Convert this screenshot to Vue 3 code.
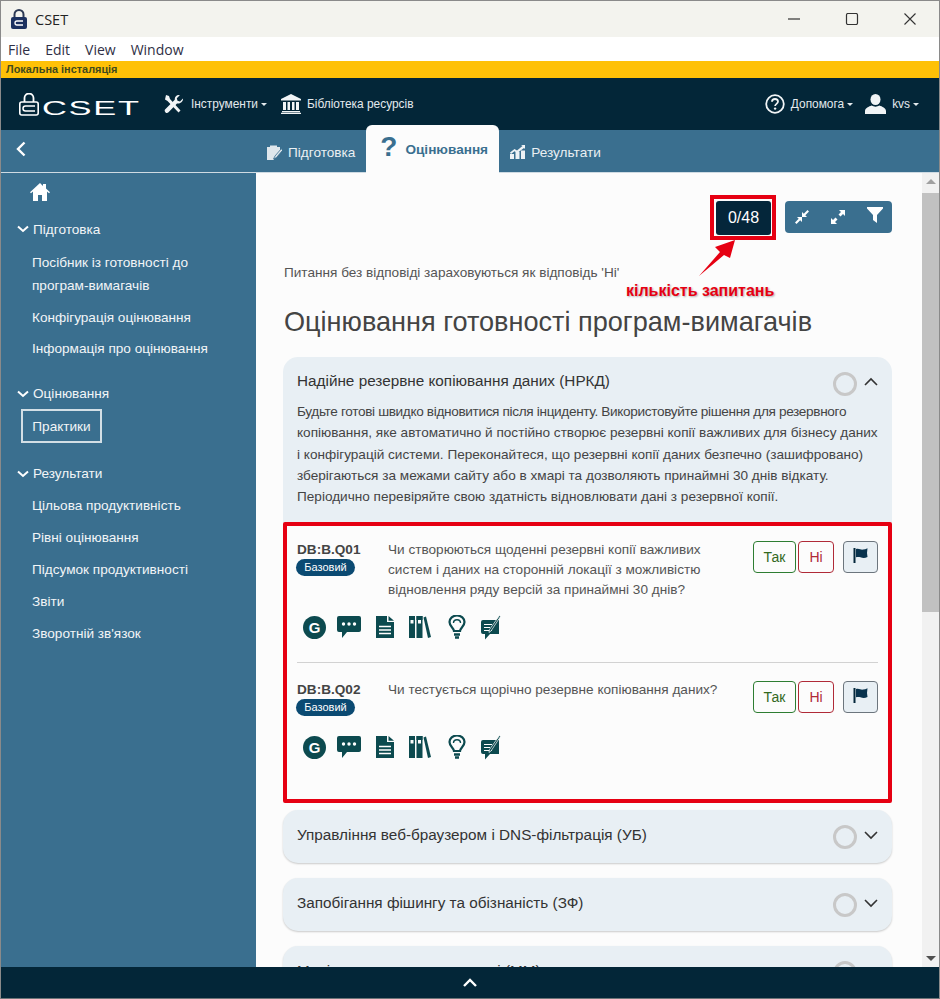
<template>
  <div class="window">
    <!-- title bar -->
    <div class="titlebar">
      <svg class="app-lock" viewBox="0 0 16 20" width="16" height="20">
        <path d="M3.500 9V5.500a4.500 4.500 0 0 1 9 0V9" fill="none" stroke="#2d3a55" stroke-width="2" />
        <rect x="0" y="8" width="16" height="12" rx="2" fill="#1c3160" />
        <path d="M12 12H6a1.500 1.500 0 0 0 0 4h6" fill="none" stroke="#fff" stroke-width="1.300" />
      </svg>
      <span class="app-name">CSET</span>
      <div class="win-controls">
        <svg viewBox="0 0 14 12" width="14" height="12"><path d="M1 6h12" stroke="#333" stroke-width="1.200" /></svg>
        <svg viewBox="0 0 14 12" width="14" height="12"><rect x="1.500" y="0.500" width="11" height="11" rx="1.500" fill="none" stroke="#333" stroke-width="1.200" /></svg>
        <svg viewBox="0 0 14 12" width="14" height="12"><path d="M1.500 0.500l11 11M12.500 0.500l-11 11" stroke="#333" stroke-width="1.100" /></svg>
      </div>
    </div>
    <div class="menubar">
      <span v-for="m in menu" :key="m">{{ m }}</span>
    </div>
    <div class="install-bar">Локальна інсталяція</div>

    <!-- top nav -->
    <div class="topnav">
      <div class="logo">
        <svg viewBox="0 0 20 23" width="20" height="23">
          <path d="M5.500 9V5a4.500 4.500 0 0 1 9 0v4" fill="none" stroke="#fff" stroke-width="1.800" />
          <rect x="0.800" y="9" width="18.400" height="13" rx="2" fill="none" stroke="#fff" stroke-width="1.600" />
          <path d="M16 13H6.500a2.200 2.200 0 0 0 0 5H16" fill="none" stroke="#fff" stroke-width="1.500" />
        </svg>
        <span class="logo-text">CSET</span>
      </div>
      <div class="nav-item tools">
        <svg viewBox="0 0 20 20" width="20" height="20">
          <path d="M2 1l3 1 1 3 10.500 11.500-2 2L3.500 7 1 5.500z" fill="#f1f4f6" />
          <path d="M19 4.500l-3 3-2.500-.8-.7-2.500 3-3c-2.800-.8-5.500 1.500-5 4.500L1.500 15a2.200 2.200 0 0 0 3 3.300L13 9.500c3 .6 6.500-2 6-5z" fill="#f1f4f6" />
        </svg>
        <span>Інструменти</span><i class="caret"></i>
      </div>
      <div class="nav-item library">
        <svg viewBox="0 0 20 20" width="20" height="20" fill="#f1f4f6">
          <path d="M10 0l10 5v1.500H0V5z" />
          <path d="M2 8h3v8H2zM6.500 8h2.500v8H6.500zM11 8h2.500v8H11zM15 8h3v8h-3zM1 17h18v1.300H1zM0 18.700h20V20H0z" />
        </svg>
        <span>Бібліотека ресурсів</span>
      </div>
      <div class="nav-right">
        <div class="nav-item help">
          <svg viewBox="0 0 20 20" width="20" height="20">
            <circle cx="10" cy="10" r="8.800" fill="none" stroke="#f1f4f6" stroke-width="1.800" />
            <path d="M7 7.800C7 5.900 8.300 5 10 5s3 1 3 2.600c0 2.300-2.900 2.200-2.900 4.400" fill="none" stroke="#f1f4f6" stroke-width="1.800" />
            <circle cx="10.100" cy="14.600" r="1.200" fill="#f1f4f6" />
          </svg>
          <span>Допомога</span><i class="caret"></i>
        </div>
        <div class="nav-item user">
          <svg viewBox="0 0 21 20" width="21" height="20" fill="#f1f4f6">
            <ellipse cx="10.500" cy="5.500" rx="5" ry="5.500" />
            <path d="M0 20v-3c0-3 4-4.500 6.500-5.500 2.500 1.500 5.500 1.500 8 0C17 12.500 21 14 21 17v3z" />
          </svg>
          <span>kvs</span><i class="caret"></i>
        </div>
      </div>
    </div>

    <!-- tabs -->
    <div class="subnav">
      <svg class="back" viewBox="0 0 10 16" width="10" height="16">
        <path d="M8.500 1.500L2 8l6.500 6.500" fill="none" stroke="#fff" stroke-width="2.400" />
      </svg>
      <div class="tabs">
        <div class="tab">
          <svg viewBox="0 0 15 15" width="15" height="15">
            <path d="M0 2h3V0.500h7V2h3v5l-4 4.500L6.500 15H0z" fill="#dfe7ec" />
            <path d="M14.500 3.500L8 11l-1.500 3 3-1.500 6-7z" fill="#dfe7ec" stroke="#3a6f8f" stroke-width="0.800" />
          </svg>
          <span>Підготовка</span>
        </div>
        <div class="tab active">
          <span class="q-mark">?</span>
          <span>Оцінювання</span>
        </div>
        <div class="tab">
          <svg viewBox="0 0 15 14" width="15" height="14" fill="#eef2f5">
            <path d="M0 9h4v5H0zM5.500 7h4v7h-4zM11 5.500h4V14h-4z" />
            <path d="M0 7.500l4.500-3.500 2.500 1.500L12.500 1 11 0h4v4l-1-1-6.800 5-2.700-1.800L1 9z" />
          </svg>
          <span>Результати</span>
        </div>
      </div>
    </div>

    <div class="main">
      <!-- sidebar -->
      <aside class="sidebar">
        <svg class="home" viewBox="0 0 20 18" width="20" height="18" fill="#fff">
          <path d="M10 0L0 9.200l1 1.100L3 8.600V18h5v-6h4v6h5V8.600l2 1.700 1-1.100-4-3.700V1h-3v2z" />
        </svg>
        <div v-for="s in sideSections" :key="s.title" class="side-section">
          <div class="side-title">
            <svg viewBox="0 0 12 8" width="12" height="8">
              <path d="M1 1.500l5 4.500 5-4.500" fill="none" stroke="#fff" stroke-width="2" />
            </svg>
            <span>{{ s.title }}</span>
          </div>
          <div
            v-for="item in s.items"
            :key="item"
            class="side-item"
            :class="{ current: item === 'Практики' }"
          >{{ item }}</div>
        </div>
      </aside>

      <!-- content -->
      <div class="content">
        <div class="toolbar">
          <div class="counter">0/48</div>
          <div class="btn-group">
            <svg viewBox="0 0 14 14" width="14" height="14" fill="#fff">
              <path d="M0 12.500L3.700 8.800 2 7h5v5l-1.800-1.700L1.500 14zM14 1.500L10.300 5.200 12 7H7V2l1.800 1.700L12.500 0z" />
            </svg>
            <svg viewBox="0 0 14 14" width="14" height="14" fill="#fff">
              <path d="M0 14V8l2 2 2.500-2.500L6.500 9.500 4 12l2 2zM14 0v6l-2-2-2.500 2.500-2-2L10 2 8 0z" />
            </svg>
            <svg viewBox="0 0 16 16" width="16" height="16" fill="#fff">
              <path d="M0 0h16v1.500L10 8v8L6 13V8L0 1.500z" />
            </svg>
          </div>
        </div>

        <p class="note">Питання без відповіді зараховуються як відповідь 'Ні'</p>
        <h1>Оцінювання готовності програм-вимагачів</h1>

        <section class="panel open">
          <div class="panel-head">
            <span>Надійне резервне копіювання даних (НРКД)</span>
            <i class="ring"></i>
            <svg class="chev" viewBox="0 0 14 9" width="14" height="9">
              <path d="M1 8l6-6 6 6" fill="none" stroke="#333" stroke-width="1.600" />
            </svg>
          </div>
          <p class="panel-desc">
            <span v-for="line in descLines" :key="line">{{ line }}</span>
          </p>
          <div class="questions">
            <div v-for="q in questions" :key="q.id" class="question">
              <div class="q-top">
                <div class="q-id">
                  <b>{{ q.id }}</b>
                  <span class="badge">Базовий</span>
                </div>
                <div class="q-text">{{ q.text }}</div>
                <div class="answers">
                  <button class="yes">Так</button>
                  <button class="no">Ні</button>
                  <button class="flag">
                    <svg viewBox="0 0 15 15" width="15" height="15">
                      <path d="M0.500 0h2v15h-2z" fill="#04263a" />
                      <path d="M3 1c3-1.200 4.500 1 7 .6 1.500-.2 3-.6 4.500-1.400L14 5l.5 4c-3 1.500-5 1-7 .3C6 8.800 4.500 8.700 3 9.300z" fill="#08324d" />
                    </svg>
                  </button>
                </div>
              </div>
              <div class="q-tools">
                <span class="g-icon">G</span>
                <svg class="t-chat" viewBox="0 0 24 22" width="24" height="22">
                  <path d="M2 0h20a2 2 0 0 1 2 2v12a2 2 0 0 1-2 2H10l-5 6v-6H2a2 2 0 0 1-2-2V2a2 2 0 0 1 2-2z" fill="#0c4a4f" />
                  <circle cx="6.500" cy="8" r="1.700" fill="#fff" /><circle cx="12" cy="8" r="1.700" fill="#fff" /><circle cx="17.500" cy="8" r="1.700" fill="#fff" />
                </svg>
                <svg viewBox="0 0 18 22" width="18" height="22">
                  <path d="M0 0h11v6h7v16H0z" fill="#0c4a4f" />
                  <path d="M12.500 0L18 4.800h-5.500z" fill="#0c4a4f" />
                  <path d="M3 10.500h12M3 14h12M3 17.500h12" stroke="#fff" stroke-width="1.300" />
                </svg>
                <svg viewBox="0 0 22 22" width="22" height="22" fill="#0c4a4f">
                  <path d="M0 0h6v22H0zM7.500 0h6v22h-6z" />
                  <path d="M14.500 1.500l2.500-1 5 20.500-3 1z" />
                  <path d="M1.500 5h3M9 5h3" stroke="#fcfcfc" stroke-width="5" />
                  <path d="M0 2h6M7.500 2h6" stroke="#0c4a4f" stroke-width="4" />
                </svg>
                <svg class="t-bulb" viewBox="0 0 18 24" width="18" height="24" fill="none" stroke="#0c4a4f">
                  <path d="M6 16c0-3-4.500-4.500-4.500-9a7.500 6.500 0 0 1 15 0c0 4.500-4.500 6-4.500 9z" stroke-width="2.200" />
                  <path d="M5.500 8c0-2 1.500-3.200 3.500-3.200S12.500 6 12.500 8" stroke-width="1.400" />
                  <path d="M6 19.500h6M7 22.500h4" stroke-width="2.600" />
                </svg>
                <svg viewBox="0 0 20 25" width="20" height="25">
                  <path d="M2 5h16v14H9l-5 5.500V19H2a2 2 0 0 1-2-2V7a2 2 0 0 1 2-2z" fill="#0c4a4f" />
                  <path d="M3 9.500h8M3 12.500h6M3 15.500h8" stroke="#fff" stroke-width="1.100" />
                  <path d="M18.500 0.500l1 1L10 16l-2 1.500.4-2.800z" fill="#0c4a4f" stroke="#fcfcfc" stroke-width="0.700" />
                </svg>
              </div>
            </div>
          </div>
        </section>

        <section v-for="p in panels" :key="p" class="panel closed">
          <div class="panel-head">
            <span>{{ p }}</span>
            <i class="ring"></i>
            <svg class="chev" viewBox="0 0 14 9" width="14" height="9">
              <path d="M1 1l6 6 6-6" fill="none" stroke="#333" stroke-width="1.600" />
            </svg>
          </div>
        </section>

        <!-- annotation over the counter -->
        <div class="counter-frame"></div>
        <svg class="arrow" viewBox="0 0 40 40" width="40" height="40">
          <path d="M1 39L22 15l-5-5L37 3l-5 18-6-3z" fill="#e60012" />
        </svg>
        <div class="arrow-label">кількість запитань</div>
      </div>

      <div class="scrollbar">
        <i class="up"></i>
        <div class="thumb"></div>
        <i class="down"></i>
      </div>
    </div>

    <div class="footer">
      <svg viewBox="0 0 14 9" width="14" height="9">
        <path d="M1 8l6-6 6 6" fill="none" stroke="#fff" stroke-width="2.400" />
      </svg>
    </div>
  </div>
</template>

<script setup>
const menu = ['File', 'Edit', 'View', 'Window']

const sideSections = [
  {
    title: 'Підготовка',
    items: ['Посібник із готовності до програм-вимагачів', 'Конфігурація оцінювання', 'Інформація про оцінювання']
  },
  { title: 'Оцінювання', items: ['Практики'] },
  {
    title: 'Результати',
    items: ['Цільова продуктивність', 'Рівні оцінювання', 'Підсумок продуктивності', 'Звіти', 'Зворотній зв\'язок']
  }
]

const descLines = [
  'Будьте готові швидко відновитися після інциденту. Використовуйте рішення для резервного',
  'копіювання, яке автоматично й постійно створює резервні копії важливих для бізнесу даних',
  'і конфігурацій системи. Переконайтеся, що резервні копії даних безпечно (зашифровано)',
  'зберігаються за межами сайту або в хмарі та дозволяють принаймні 30 днів відкату.',
  'Періодично перевіряйте свою здатність відновлювати дані з резервної копії.'
]

const questions = [
  {
    id: 'DB:B.Q01',
    text: 'Чи створюються щоденні резервні копії важливих систем і даних на сторонній локації з можливістю відновлення ряду версій за принаймні 30 днів?'
  },
  { id: 'DB:B.Q02', text: 'Чи тестується щорічно резервне копіювання даних?' }
]

const panels = [
  'Управління веб-браузером і DNS-фільтрація (УБ)',
  'Запобігання фішингу та обізнаність (ЗФ)',
  'Моніторинг та захист мережі (ММ)'
]
</script>

<style>
html,
body {
  margin: 0;
  overflow: hidden;
}
</style>

<style scoped>
.window {
  width: 940px;
  height: 999px;
  box-sizing: border-box;
  border: 1px solid #8a8a8a;
  border-bottom-color: #6d7478;
  display: flex;
  flex-direction: column;
  overflow: hidden;
  font-family: "Liberation Sans", Arial, sans-serif;
  background: #fcfcfc;
}

/* title + menu */
.titlebar {
  height: 36px;
  flex: none;
  background: #f3f3ee;
  display: flex;
  align-items: center;
  padding-left: 10px;
}
.app-name {
  margin-left: 8px;
  font: 14.5px "Open Sans", sans-serif;
  color: #222;
}
.win-controls {
  margin-left: auto;
  display: flex;
  gap: 44px;
  padding-right: 22px;
}
.menubar {
  height: 24px;
  flex: none;
  background: #fff;
  display: flex;
  align-items: center;
  gap: 15px;
  padding-left: 7px;
  font: 14px "Open Sans", sans-serif;
  color: #2f2f45;
}
.install-bar {
  height: 17px;
  flex: none;
  box-sizing: border-box;
  background: #ffc107;
  padding-left: 5px;
  font-size: 10.9px;
  font-weight: 700;
  line-height: 17px;
  color: #3f4a1e;
}

/* top nav */
.topnav {
  height: 52px;
  flex: none;
  background: #032638;
  display: flex;
  align-items: center;
  padding-left: 18px;
  color: #e4eaee;
  font-size: 11.9px;
}
.logo {
  width: 122px;
  display: flex;
  align-items: flex-end;
  gap: 3px;
  height: 23px;
  margin-right: 23px;
}
.logo-text {
  font-size: 20px;
  line-height: 15px;
  height: 15px;
  color: #fff;
  letter-spacing: 1px;
  transform: scaleX(1.72);
  transform-origin: left bottom;
}
.nav-item {
  display: flex;
  align-items: center;
  gap: 7px;
}
.caret {
  width: 0;
  height: 0;
  border: 3px solid transparent;
  border-top-color: #e4eaee;
  border-bottom: 0;
  margin-left: -4px;
}
.library {
  margin-left: 14px;
  gap: 6px;
}
.nav-right {
  margin-left: auto;
  display: flex;
  gap: 12px;
  padding-right: 20px;
}
.user,
.help {
  gap: 6px;
}
.help .caret,
.user .caret {
  margin-left: -3px;
}

/* tabs */
.subnav {
  height: 42px;
  flex: none;
  background: #3a6f8f;
  border-bottom: 1px solid #cfdbe3;
  display: flex;
  align-items: center;
  padding-left: 15px;
  position: relative;
}
.back {
  margin-bottom: 4px;
}
.tabs {
  position: absolute;
  left: 255px;
  bottom: 0;
  display: flex;
  align-items: flex-end;
}
.tab {
  height: 42px;
  display: flex;
  align-items: center;
  gap: 6px;
  padding: 2px 11px 0;
  box-sizing: border-box;
  font-size: 13.6px;
  color: #eaf0f3;
}
.tab.active {
  height: 48px;
  width: 133px;
  margin-bottom: -1px;
  padding: 0 0 0 14px;
  background: #fcfcfc;
  border-radius: 6px 6px 0 0;
  color: #3a6f8f;
  font-weight: 700;
  gap: 8px;
}
.q-mark {
  font-size: 28px;
  line-height: 28px;
  margin-bottom: 4px;
}

/* layout */
.main {
  flex: 1;
  min-height: 0;
  display: flex;
}

/* sidebar */
.sidebar {
  width: 255px;
  flex: none;
  background: #3a6f8f;
  color: #f2f5f7;
  font-size: 13.6px;
  padding: 10px 0 0 16px;
  box-sizing: border-box;
}
.home {
  display: block;
  margin: 0 0 18px 13px;
}
.side-section {
  margin-bottom: 21px;
}
.side-section:nth-of-type(1) {
  margin-bottom: 23.5px;
}
.side-section:nth-of-type(1) .side-item {
  margin-bottom: 8.5px;
}
.side-section:nth-of-type(3) .side-title {
  margin-bottom: 10px;
}
.side-title {
  display: flex;
  align-items: center;
  gap: 4px;
  height: 20px;
  margin-bottom: 12px;
}
.side-item {
  width: 190px;
  padding-left: 15px;
  margin-bottom: 9px;
  line-height: 23px;
}
.side-item.current {
  width: 81px;
  box-sizing: border-box;
  margin: -7px 0 0 4px;
  padding: 0;
  height: 34px;
  line-height: 31px;
  text-align: center;
  border: 2px solid #d3dfe6;
}

/* content */
.content {
  flex: 1;
  min-width: 0;
  position: relative;
  overflow: hidden;
  padding: 28px 30px 0 27px;
  color: #444;
}
.toolbar {
  display: flex;
  justify-content: flex-end;
  align-items: flex-start;
  gap: 14px;
}
.counter {
  width: 55px;
  height: 34px;
  background: #04263a;
  color: #fff;
  font-size: 16px;
  line-height: 34px;
  text-align: center;
  border-radius: 3px;
}
.btn-group {
  width: 107px;
  height: 32px;
  background: #3a6f8f;
  border-radius: 4px;
  display: flex;
  align-items: center;
  gap: 22px;
  padding-left: 10px;
  box-sizing: border-box;
}
.btn-group svg:last-child {
  margin-bottom: 5px;
}
.note {
  margin: 30px 0 0 1px;
  font-size: 13.6px;
  line-height: 16px;
  color: #555;
}
h1 {
  margin: 23px 0 0 1px;
  font-size: 27.1px;
  font-weight: 400;
  line-height: 36px;
  color: #444;
}

/* panels */
.panel {
  background: #e8eff4;
  border-radius: 15px;
  box-shadow: 0 1px 2px rgba(0, 0, 0, 0.2);
  margin-bottom: 15px;
}
.panel.open {
  margin-top: 17px;
  margin-bottom: 7px;
  box-shadow: none;
}
.panel-head {
  height: 48px;
  display: flex;
  align-items: center;
  padding: 0 14px;
  font-size: 15.3px;
  color: #333;
}
.closed .panel-head {
  height: 53px;
}
.closed .panel-head span {
  margin-bottom: 4px;
}
.closed .chev {
  margin-bottom: 2px;
}
.ring {
  width: 24px;
  height: 24px;
  box-sizing: border-box;
  border: 3px solid #c8c8c8;
  border-radius: 50%;
  margin-left: auto;
  margin-right: 7px;
}
.open .ring {
  margin-top: 6px;
}
.panel-desc {
  margin: -4px 0 0;
  padding: 0 14px;
  font-size: 13.6px;
  line-height: 21.3px;
  color: #444;
}
.panel-desc span {
  display: block;
  white-space: nowrap;
}
.panel-desc span:first-child {
  letter-spacing: -0.34px;
}
.questions {
  margin-top: 15px;
  height: 281px;
  box-sizing: border-box;
  background: #fcfcfc;
  border: 4px solid #e60012;
  border-radius: 2px;
  padding: 0 10px;
}
.question {
  box-sizing: border-box;
  padding-top: 16px;
}
.question:first-child {
  border-bottom: 1px solid #d2d2d2;
  height: 137px;
  padding-top: 13px;
}
.q-top {
  display: flex;
  align-items: flex-start;
  min-height: 55px;
}
.q-id {
  width: 91px;
  flex: none;
  font-size: 13.6px;
  line-height: 16px;
}
.q-id b {
  display: block;
  margin-top: 3px;
  color: #444;
}
.badge {
  display: inline-block;
  width: 59px;
  height: 17px;
  margin: 1px 0 0 -1px;
  background: #0b4a72;
  color: #fff;
  font-size: 11px;
  line-height: 17px;
  text-align: center;
  border-radius: 9px;
}
.q-text {
  width: 340px;
  flex: none;
  font-size: 13.6px;
  line-height: 20px;
  color: #555;
  margin: 1px 0 14px;
}
.answers {
  margin-left: auto;
  margin-top: 2px;
  display: flex;
  gap: 2px;
}
.answers button {
  height: 32px;
  box-sizing: border-box;
  background: #fcfcfc;
  border-radius: 4px;
  font: 14px "Liberation Sans", Arial, sans-serif;
  padding: 0;
}
.yes {
  width: 43px;
  border: 1px solid #2e7d32;
  color: #33691e;
}
.no {
  width: 36px;
  border: 1px solid #b02a37;
  color: #b02a37;
}
.answers .flag {
  width: 35px;
  margin-left: 7px;
  border: 1px solid #6c757d;
  background: #e8eff4;
  display: flex;
  align-items: center;
  justify-content: center;
  padding-bottom: 3px;
}
.q-tools {
  display: flex;
  align-items: center;
  gap: 15px;
  padding-left: 6px;
  height: 26px;
}
.t-chat {
  margin-left: -4px;
}
.t-bulb {
  margin-left: 2px;
}
.g-icon {
  width: 23px;
  height: 23px;
  border-radius: 50%;
  background: #0c4a4f;
  color: #fff;
  font-size: 15px;
  font-weight: 700;
  line-height: 23px;
  text-align: center;
}

/* annotations */
.counter-frame {
  position: absolute;
  left: 454px;
  top: 22px;
  width: 66px;
  height: 45px;
  box-sizing: border-box;
  border: 4px solid #e60012;
}
.arrow {
  position: absolute;
  left: 442px;
  top: 64px;
}
.arrow-label {
  position: absolute;
  left: 370px;
  top: 109px;
  font-size: 16px;
  font-weight: 700;
  color: #e60012;
  text-shadow: 1px 1px 2px rgba(0, 0, 0, 0.3);
  white-space: nowrap;
}

/* scrollbar */
.scrollbar {
  width: 17px;
  flex: none;
  background: #f1f1f1;
  position: relative;
}
.thumb {
  margin-top: 20px;
  height: 419px;
  background: #c1c1c1;
}
.scrollbar i {
  position: absolute;
  left: 4px;
  width: 0;
  height: 0;
  border: 5px solid transparent;
}
.up {
  top: 6px;
  border-top: 0 !important;
  border-bottom-color: #a0a0a0 !important;
}
.down {
  bottom: 6px;
  border-bottom: 0 !important;
  border-top-color: #505050 !important;
}

.footer {
  height: 31px;
  flex: none;
  background: #032638;
  display: flex;
  align-items: center;
  justify-content: center;
}
</style>
